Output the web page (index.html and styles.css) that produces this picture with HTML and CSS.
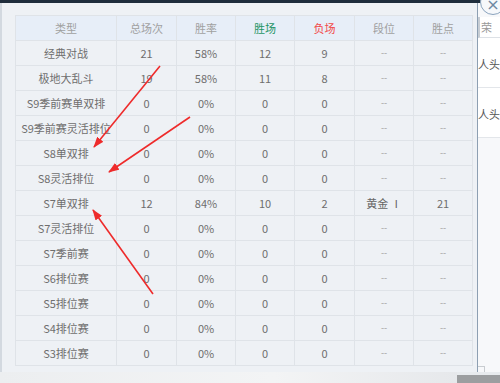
FILE: index.html
```html
<!DOCTYPE html>
<html>
<head>
<meta charset="utf-8">
<link rel="stylesheet" href="styles.css">
</head>
<body>
<div class="screen">
  <div class="top-band"></div>
  <div class="main">
    <div class="panel">
      <table class="stats">
        <colgroup>
          <col class="c-type"><col class="c60"><col class="c59"><col class="c59"><col class="c60"><col class="c59"><col class="c59">
        </colgroup>
        <thead>
          <tr><th>类型</th><th>总场次</th><th>胜率</th><th class="win">胜场</th><th class="lose">负场</th><th>段位</th><th>胜点</th></tr>
        </thead>
        <tbody>
          <tr><td>经典对战</td><td>21</td><td>58%</td><td>12</td><td>9</td><td class="dash">--</td><td class="dash">--</td></tr>
          <tr><td>极地大乱斗</td><td>19</td><td>58%</td><td>11</td><td>8</td><td class="dash">--</td><td class="dash">--</td></tr>
          <tr><td>S9季前赛单双排</td><td>0</td><td>0%</td><td>0</td><td>0</td><td class="dash">--</td><td class="dash">--</td></tr>
          <tr><td>S9季前赛灵活排位</td><td>0</td><td>0%</td><td>0</td><td>0</td><td class="dash">--</td><td class="dash">--</td></tr>
          <tr><td>S8单双排</td><td>0</td><td>0%</td><td>0</td><td>0</td><td class="dash">--</td><td class="dash">--</td></tr>
          <tr><td>S8灵活排位</td><td>0</td><td>0%</td><td>0</td><td>0</td><td class="dash">--</td><td class="dash">--</td></tr>
          <tr><td>S7单双排</td><td>12</td><td>84%</td><td>10</td><td>2</td><td class="rank">黄金 Ⅰ</td><td>21</td></tr>
          <tr><td>S7灵活排位</td><td>0</td><td>0%</td><td>0</td><td>0</td><td class="dash">--</td><td class="dash">--</td></tr>
          <tr><td>S7季前赛</td><td>0</td><td>0%</td><td>0</td><td>0</td><td class="dash">--</td><td class="dash">--</td></tr>
          <tr><td>S6排位赛</td><td>0</td><td>0%</td><td>0</td><td>0</td><td class="dash">--</td><td class="dash">--</td></tr>
          <tr><td>S5排位赛</td><td>0</td><td>0%</td><td>0</td><td>0</td><td class="dash">--</td><td class="dash">--</td></tr>
          <tr><td>S4排位赛</td><td>0</td><td>0%</td><td>0</td><td>0</td><td class="dash">--</td><td class="dash">--</td></tr>
          <tr><td>S3排位赛</td><td>0</td><td>0%</td><td>0</td><td>0</td><td class="dash">--</td><td class="dash">--</td></tr>
        </tbody>
      </table>
    </div>
    <div class="side">
      <div class="side-head">荣</div>
      <div class="side-row">人头</div>
      <div class="side-row">人头</div>
      <div class="side-box"></div>
    </div>
  </div>
  <div class="footer">
    <div class="footer-light"></div>
    <div class="footer-dark"></div>
  </div>
  <div class="close-btn">×</div>
  <svg class="arrows" width="500" height="383" viewBox="0 0 500 383">
    <defs>
      <marker id="ah" markerWidth="11" markerHeight="8" refX="10" refY="4" orient="auto" markerUnits="userSpaceOnUse">
        <path d="M0,0 L11,4 L0,8 z" fill="#ee2b2b"/>
      </marker>
    </defs>
    <line x1="160" y1="66" x2="94" y2="147" stroke="#ee2b2b" stroke-width="1.6" marker-end="url(#ah)"/>
    <line x1="190" y1="117" x2="109" y2="172" stroke="#ee2b2b" stroke-width="1.6" marker-end="url(#ah)"/>
    <line x1="153" y1="294" x2="93" y2="210" stroke="#ee2b2b" stroke-width="1.6" marker-end="url(#ah)"/>
  </svg>
</div>
</body>
</html>
```
FILE: styles.css
```css
html, body {
  margin: 0;
  padding: 0;
}
body {
  width: 500px;
  height: 383px;
  overflow: hidden;
  font-family: "Noto Sans CJK SC", "Noto Sans", sans-serif;
  background: #e9ecef;
}
.screen {
  position: relative;
  width: 500px;
  height: 383px;
  display: flex;
  flex-direction: column;
}
.top-band {
  height: 3px;
  background: #1f2d3c;
}
.main {
  display: flex;
  height: 369px;
}
.panel {
  width: 486px;
  border-left: 2px solid #d3d9e0;
  border-right: 1px solid #8d9fb2;
  background: #eef1f5;
  padding: 12px 0 0 13px;
  box-sizing: border-box;
}
.stats {
  border-collapse: collapse;
  table-layout: fixed;
  width: 458px;
  font-size: 11px;
  color: #6e6e6e;
}
.c-type { width: 101px; }
.c60 { width: 60px; }
.c59 { width: 59px; }
.stats th, .stats td {
  border: 1px solid #dfe3e8;
  height: 24px;
  padding: 0;
  text-align: center;
  white-space: nowrap;
  line-height: 24px;
}
.stats th {
  background: #e7eef8;
  font-weight: normal;
  color: #a0a0a0;
}
.stats td { color: #6e6e6e; }
.stats th.win { color: #1f9466; }
.stats th.lose { color: #f24a4a; }
.stats td.dash { color: #a0a0a0; font-size: 9px; }
.stats td.rank { color: #666; }
.side {
  flex: 1;
  background: #f7f8fa;
  font-size: 11px;
  color: #555;
  padding-top: 14px;
}
.side-head {
  height: 20px;
  line-height: 20px;
  background: #fff;
  border-bottom: 1px solid #dde1e6;
  border-left: 2px solid #c7cdd4;
  color: #999;
  padding-left: 1px;
}
.side-row {
  height: 49px;
  line-height: 52px;
  border-bottom: 1px solid #e3e6ea;
  background: #fff;
  white-space: nowrap;
}
.side-box {
  margin-top: 228px;
  height: 14px;
  width: 6px;
  border: 1px solid #c8ccd0;
  border-left: none;
}
.footer {
  flex: 1;
  display: flex;
  align-items: flex-end;
  background: #e8ebee;
}
.footer-light { flex: 1; height: 100%; background: linear-gradient(90deg, #eceef0, #f3f4f5 60%, #e6e8eb); }
.footer-dark { width: 43px; height: 8px; background: #9c9ea0; }
.close-btn {
  position: absolute;
  left: 480px;
  top: -11px;
  width: 24px;
  height: 24px;
  border-radius: 50%;
  border: 1px solid #8aa3bd;
  background: #f6f8fb;
  color: #6f88a3;
  font-size: 16px;
  line-height: 30px;
  text-align: center;
  font-family: "DejaVu Sans", sans-serif;
}
.arrows {
  position: absolute;
  left: 0;
  top: 0;
  pointer-events: none;
}
```
